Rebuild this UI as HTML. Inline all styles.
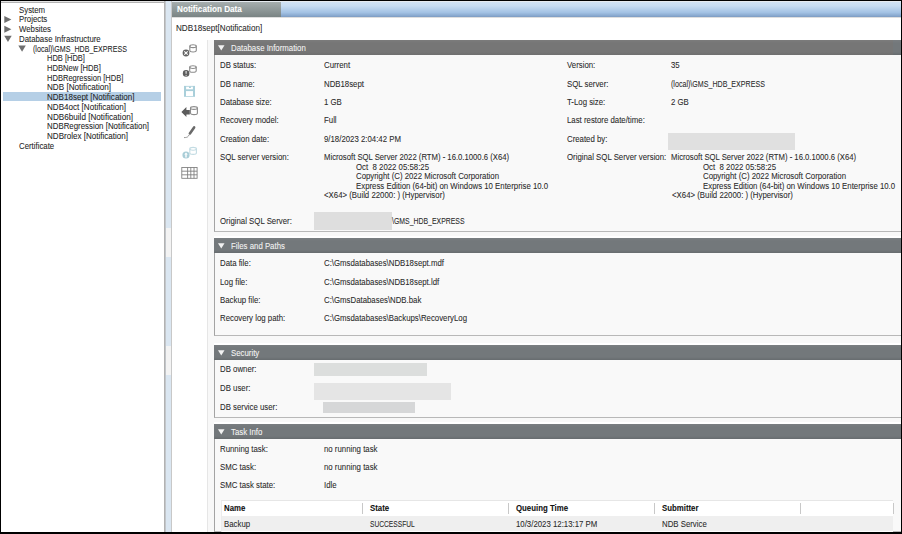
<!DOCTYPE html>
<html><head><meta charset="utf-8"><style>
html,body{margin:0;padding:0;width:902px;height:534px;overflow:hidden;background:#fff}
body{position:relative;font-family:"Liberation Sans",sans-serif}
.r{position:absolute}
.t,.tr,.th,.tb,.tb2{position:absolute;white-space:nowrap;font-size:8.6px;line-height:10px;color:#2a2a2a;transform:scaleX(0.91);transform-origin:0 0;-webkit-text-stroke:0.07px currentColor}
.tr{color:#262626}
.th{color:#f4f4f4}
.tb{font-weight:bold;color:#fff;transform:scaleX(0.95)!important}
.tb2{font-weight:bold;color:#111}
svg{position:absolute;left:0;top:0}
</style></head><body>
<div class="r" style="left:0px;top:0px;width:902px;height:534px;background:#fff"></div>
<div class="r" style="left:0px;top:0px;width:902px;height:1px;background:#000"></div>
<div class="r" style="left:0px;top:532px;width:902px;height:2px;background:#000"></div>
<div class="r" style="left:0px;top:0px;width:1px;height:534px;background:#000"></div>
<div class="r" style="left:901px;top:0px;width:1px;height:534px;background:#000"></div>
<div class="r" style="left:1px;top:1px;width:163px;height:1px;background:#e4e4e4"></div>
<div class="r" style="left:1px;top:2px;width:163px;height:1px;background:#b4b4b4"></div>
<div class="r" style="left:164px;top:1px;width:1px;height:531px;background:#b2b2b2"></div>
<div class="r" style="left:165px;top:1px;width:1px;height:531px;background:#c2c6ca"></div>
<div class="r" style="left:166px;top:1px;width:5px;height:531px;background:#dae6f1"></div>
<div class="r" style="left:166px;top:228px;width:5px;height:28.5px;background:#f3f3f3"></div>
<div class="r" style="left:166px;top:345.7px;width:5px;height:29.30000000000001px;background:#f3f3f3"></div>
<div class="r" style="left:171px;top:1px;width:1px;height:531px;background:#c8c8c8"></div>
<div class="r" style="left:3px;top:92.3px;width:158px;height:9.200000000000003px;background:#b5cfe6"></div>
<div class="tr" style="left:18.80px;top:4.62px;">System</div>
<div class="tr" style="left:18.80px;top:14.34px;">Projects</div>
<div class="tr" style="left:18.80px;top:24.06px;">Websites</div>
<div class="tr" style="left:18.80px;top:33.78px;">Database Infrastructure</div>
<div class="tr" style="left:32.90px;top:43.50px;transform:scaleX(0.826);">(local)\GMS_HDB_EXPRESS</div>
<div class="tr" style="left:46.80px;top:53.22px;transform:scaleX(0.873);">HDB [HDB]</div>
<div class="tr" style="left:46.80px;top:62.94px;transform:scaleX(0.887);">HDBNew [HDB]</div>
<div class="tr" style="left:46.80px;top:72.66px;transform:scaleX(0.878);">HDBRegression [HDB]</div>
<div class="tr" style="left:46.80px;top:82.38px;transform:scaleX(0.945);">NDB [Notification]</div>
<div class="tr" style="left:46.80px;top:92.10px;transform:scaleX(0.935);">NDB18sept [Notification]</div>
<div class="tr" style="left:46.80px;top:101.82px;transform:scaleX(0.941);">NDB4oct [Notification]</div>
<div class="tr" style="left:46.80px;top:111.54px;transform:scaleX(0.947);">NDB6build [Notification]</div>
<div class="tr" style="left:46.80px;top:121.26px;transform:scaleX(0.917);">NDBRegression [Notification]</div>
<div class="tr" style="left:46.80px;top:130.98px;transform:scaleX(0.937);">NDBrolex [Notification]</div>
<div class="tr" style="left:18.80px;top:140.70px;">Certificate</div>
<div class="r" style="left:172px;top:1px;width:729px;height:1px;background:#e6ebf0"></div>
<div class="r" style="left:172px;top:2px;width:109px;height:15px;background:linear-gradient(#a6aeae,#7a8484)"></div>
<div class="r" style="left:281px;top:2px;width:620px;height:15px;background:linear-gradient(#d0e2f4,#c8ddf2 25%,#a3c2e4 70%,#8aaad0 90%,#7d9bc1)"></div>
<div class="r" style="left:172px;top:17px;width:729px;height:1px;background:#dedede"></div>
<div class="tb" style="left:176.70px;top:3.72px;">Notification Data</div>
<div class="t" style="left:175.80px;top:23.42px;transform:scaleX(0.945);">NDB18sept[Notification]</div>
<div class="r" style="left:207px;top:40px;width:1px;height:492px;background:#e6e6e6"></div>
<div class="r" style="left:208px;top:40px;width:693px;height:492px;background:#f8f8f8"></div>
<div class="r" style="left:214px;top:40px;width:687px;height:192px;background:#f9f9f9;border-left:1px solid #a4a4a4;border-bottom:1px solid #b8b8b8;box-sizing:border-box"></div>
<div class="r" style="left:214px;top:40px;width:687px;height:14.5px;background:linear-gradient(#7c7c7c,#767676 20%,#767676 80%,#6f6f6f)"></div>
<div class="th" style="left:231.00px;top:43.02px;">Database Information</div>
<div class="r" style="left:892.5px;top:40px;width:8.5px;height:14.5px;background:linear-gradient(#7a7e81,#73787b 20%,#73787b 80%,#676c6f)"></div>
<div class="r" style="left:214px;top:238px;width:687px;height:98px;background:#f9f9f9;border-left:1px solid #a4a4a4;border-bottom:1px solid #b8b8b8;box-sizing:border-box"></div>
<div class="r" style="left:214px;top:235.5px;width:687px;height:2.5px;background:#fff"></div>
<div class="r" style="left:214px;top:238px;width:687px;height:14.5px;background:linear-gradient(#7a7e81,#73787b 20%,#73787b 80%,#676c6f)"></div>
<div class="th" style="left:231.00px;top:241.02px;">Files and Paths</div>
<div class="r" style="left:214px;top:345px;width:687px;height:73px;background:#f9f9f9;border-left:1px solid #a4a4a4;border-bottom:1px solid #b8b8b8;box-sizing:border-box"></div>
<div class="r" style="left:214px;top:342.5px;width:687px;height:2.5px;background:#fff"></div>
<div class="r" style="left:214px;top:345px;width:687px;height:14.5px;background:linear-gradient(#7a7e81,#73787b 20%,#73787b 80%,#676c6f)"></div>
<div class="th" style="left:231.00px;top:348.02px;">Security</div>
<div class="r" style="left:214px;top:424px;width:687px;height:108px;background:#f9f9f9;border-left:1px solid #a4a4a4;border-bottom:1px solid #b8b8b8;box-sizing:border-box"></div>
<div class="r" style="left:214px;top:421.5px;width:687px;height:2.5px;background:#fff"></div>
<div class="r" style="left:214px;top:424px;width:687px;height:14.5px;background:linear-gradient(#7a7e81,#73787b 20%,#73787b 80%,#676c6f)"></div>
<div class="th" style="left:231.00px;top:427.02px;">Task Info</div>
<div class="t" style="left:220.00px;top:60.12px;">DB status:</div>
<div class="t" style="left:323.80px;top:60.12px;">Current</div>
<div class="t" style="left:567.10px;top:60.12px;">Version:</div>
<div class="t" style="left:671.00px;top:60.12px;">35</div>
<div class="t" style="left:220.00px;top:78.62px;">DB name:</div>
<div class="t" style="left:323.80px;top:78.62px;">NDB18sept</div>
<div class="t" style="left:567.10px;top:78.62px;">SQL server:</div>
<div class="t" style="left:671.00px;top:78.62px;transform:scaleX(0.826);">(local)\GMS_HDB_EXPRESS</div>
<div class="t" style="left:220.00px;top:97.02px;">Database size:</div>
<div class="t" style="left:323.80px;top:97.02px;">1 GB</div>
<div class="t" style="left:567.10px;top:97.02px;">T-Log size:</div>
<div class="t" style="left:671.00px;top:97.02px;">2 GB</div>
<div class="t" style="left:220.00px;top:115.42px;">Recovery model:</div>
<div class="t" style="left:323.80px;top:115.42px;">Full</div>
<div class="t" style="left:567.10px;top:115.42px;">Last restore date/time:</div>
<div class="t" style="left:220.00px;top:133.82px;">Creation date:</div>
<div class="t" style="left:323.80px;top:133.82px;">9/18/2023 2:04:42 PM</div>
<div class="t" style="left:567.10px;top:133.82px;">Created by:</div>
<div class="t" style="left:220.00px;top:152.22px;">SQL server version:</div>
<div class="t" style="left:323.80px;top:152.22px;transform:scaleX(0.897);">Microsoft SQL Server 2022 (RTM) - 16.0.1000.6 (X64)</div>
<div class="t" style="left:567.10px;top:152.22px;">Original SQL Server version:</div>
<div class="t" style="left:671.00px;top:152.22px;transform:scaleX(0.897);">Microsoft SQL Server 2022 (RTM) - 16.0.1000.6 (X64)</div>
<div class="t" style="left:355.80px;top:161.77px;white-space:pre">Oct  8 2022 05:58:25</div>
<div class="t" style="left:703.00px;top:161.77px;white-space:pre">Oct  8 2022 05:58:25</div>
<div class="t" style="left:355.80px;top:171.32px;white-space:pre">Copyright (C) 2022 Microsoft Corporation</div>
<div class="t" style="left:703.00px;top:171.32px;white-space:pre">Copyright (C) 2022 Microsoft Corporation</div>
<div class="t" style="left:355.80px;top:180.87px;white-space:pre">Express Edition (64-bit) on Windows 10 Enterprise 10.0</div>
<div class="t" style="left:703.00px;top:180.87px;white-space:pre">Express Edition (64-bit) on Windows 10 Enterprise 10.0</div>
<div class="t" style="left:324.40px;top:190.42px;white-space:pre">&lt;X64&gt; (Build 22000: ) (Hypervisor)</div>
<div class="t" style="left:671.60px;top:190.42px;white-space:pre">&lt;X64&gt; (Build 22000: ) (Hypervisor)</div>
<div class="r" style="left:668px;top:132.7px;width:127px;height:17.100000000000023px;background:#e0e0e0"></div>
<div class="r" style="left:314px;top:212px;width:78px;height:17.599999999999994px;background:#dedede"></div>
<div class="t" style="left:220.00px;top:216.02px;">Original SQL Server:</div>
<div class="t" style="left:392.00px;top:216.02px;transform:scaleX(0.804);">\GMS_HDB_EXPRESS</div>
<div class="t" style="left:220.00px;top:258.22px;">Data file:</div>
<div class="t" style="left:323.80px;top:258.22px;">C:\Gmsdatabases\NDB18sept.mdf</div>
<div class="t" style="left:220.00px;top:276.62px;">Log file:</div>
<div class="t" style="left:323.80px;top:276.62px;">C:\Gmsdatabases\NDB18sept.ldf</div>
<div class="t" style="left:220.00px;top:294.82px;">Backup file:</div>
<div class="t" style="left:323.80px;top:294.82px;">C:\GmsDatabases\NDB.bak</div>
<div class="t" style="left:220.00px;top:312.92px;">Recovery log path:</div>
<div class="t" style="left:323.80px;top:312.92px;">C:\Gmsdatabases\Backups\RecoveryLog</div>
<div class="t" style="left:220.00px;top:364.32px;">DB owner:</div>
<div class="t" style="left:220.00px;top:383.02px;">DB user:</div>
<div class="t" style="left:220.00px;top:401.82px;">DB service user:</div>
<div class="r" style="left:314px;top:362.8px;width:113px;height:13.099999999999966px;background:#dcdedd"></div>
<div class="r" style="left:314px;top:382.9px;width:137px;height:16.900000000000034px;background:#e5e5e5"></div>
<div class="r" style="left:323px;top:401.8px;width:92px;height:11.199999999999989px;background:#d6d7d8"></div>
<div class="t" style="left:220.00px;top:443.82px;">Running task:</div>
<div class="t" style="left:323.80px;top:443.82px;">no running task</div>
<div class="t" style="left:220.00px;top:462.12px;">SMC task:</div>
<div class="t" style="left:323.80px;top:462.12px;">no running task</div>
<div class="t" style="left:220.00px;top:480.22px;">SMC task state:</div>
<div class="t" style="left:323.80px;top:480.22px;">Idle</div>
<div class="r" style="left:220.5px;top:500.2px;width:672.5px;height:31.80000000000001px;background:#fff;border-top:1px solid #e6e6e6;border-left:1px solid #ececec;box-sizing:border-box"></div>
<div class="r" style="left:221.5px;top:516px;width:671.5px;height:15px;background:#efefef"></div>
<div class="r" style="left:362px;top:503px;width:1px;height:11px;background:#c8c8c8"></div>
<div class="r" style="left:508.3px;top:503px;width:1.0px;height:11px;background:#c8c8c8"></div>
<div class="r" style="left:654px;top:503px;width:1px;height:11px;background:#c8c8c8"></div>
<div class="r" style="left:800px;top:503px;width:1px;height:11px;background:#c8c8c8"></div>
<div class="r" style="left:892.6px;top:503px;width:1.0px;height:11px;background:#c8c8c8"></div>
<div class="tb2" style="left:224.30px;top:502.82px;">Name</div>
<div class="tb2" style="left:369.70px;top:502.82px;">State</div>
<div class="tb2" style="left:515.60px;top:502.82px;">Queuing Time</div>
<div class="tb2" style="left:661.50px;top:502.82px;">Submitter</div>
<div class="t" style="left:224.30px;top:518.62px;">Backup</div>
<div class="t" style="left:369.70px;top:518.62px;transform:scaleX(0.775);">SUCCESSFUL</div>
<div class="t" style="left:515.60px;top:518.62px;">10/3/2023 12:13:17 PM</div>
<div class="t" style="left:661.50px;top:518.62px;">NDB Service</div>
<svg width="902" height="534" viewBox="0 0 902 534">
<polygon points="4.3,15.92 11.4,19.42 4.3,22.92" fill="#6f6f6f"/>
<polygon points="4.3,25.64 11.4,29.14 4.3,32.64" fill="#6f6f6f"/>
<polygon points="4.20,35.76 11.70,35.76 7.95,42.06" fill="#6f6f6f"/>
<polygon points="18.30,45.48 25.80,45.48 22.05,51.78" fill="#6f6f6f"/>
<polygon points="218,45.30 224.5,45.30 221.25,50.60" fill="#f2f2f2"/>
<polygon points="218,243.30 224.5,243.30 221.25,248.60" fill="#f2f2f2"/>
<polygon points="218,350.30 224.5,350.30 221.25,355.60" fill="#f2f2f2"/>
<polygon points="218,429.30 224.5,429.30 221.25,434.60" fill="#f2f2f2"/>
<g fill="none" stroke="#8c8c8c" stroke-width="1.1"><path d="M189.8,46.199999999999996 L189.8,50.6 A3.25,1.4 0 0 0 196.3,50.6 L196.3,46.199999999999996"/><ellipse cx="193.05" cy="46.199999999999996" rx="3.25" ry="1.4"/></g>
<circle cx="186" cy="53" r="3.4" fill="#636363"/>
<path d="M184.3,51.3 L187.7,54.7 M187.7,51.3 L184.3,54.7" stroke="#fff" stroke-width="1.1"/>
<g fill="none" stroke="#8c8c8c" stroke-width="1.1"><path d="M189.7,67.10000000000001 L189.7,70.89999999999999 A3.25,1.4 0 0 0 196.2,70.89999999999999 L196.2,67.10000000000001"/><ellipse cx="192.95" cy="67.10000000000001" rx="3.25" ry="1.4"/></g>
<circle cx="186.1" cy="73.4" r="3.3" fill="#5e5e5e"/>
<path d="M186.1,71.0 L186.1,73.8" stroke="#e8e8e8" stroke-width="1.1"/><circle cx="186.1" cy="75.3" r="0.6" fill="#e8e8e8"/>
<rect x="184" y="85.9" width="11" height="10.9" fill="#a9cfda"/>
<rect x="186.1" y="86.7" width="6.8" height="2.6" fill="#fff"/>
<rect x="189.1" y="86.7" width="1.7" height="1.2" fill="#94c2cf"/>
<rect x="186.0" y="91.1" width="7.0" height="5.0" fill="#fff"/>
<g fill="none" stroke="#8c8c8c" stroke-width="1.1"><path d="M190.5,108.0 L190.5,113.19999999999999 A3.450000000000003,1.4 0 0 0 197.4,113.19999999999999 L197.4,108.0"/><ellipse cx="193.95" cy="108.0" rx="3.450000000000003" ry="1.4"/></g>
<path d="M181.4,112.1 L186.4,107 L186.4,109.9 L189.8,109.9 L189.8,114.4 L186.4,114.4 L186.4,116.9 Z" fill="#5c5c5c"/>
<path d="M189.9,133.4 L194.1,127.4" stroke="#6a6a6a" stroke-width="2.6" stroke-linecap="round"/>
<path d="M189.3,134.6 L188.3,136.2 C187.5,137.3 186,137.6 184,137.6" stroke="#8a8a8a" stroke-width="0.9" fill="none"/>
<g fill="none" stroke="#c3dce3" stroke-width="1.1"><path d="M189.8,148.8 L189.8,153.0 A3.299999999999997,1.4 0 0 0 196.4,153.0 L196.4,148.8"/><ellipse cx="193.10000000000002" cy="148.8" rx="3.299999999999997" ry="1.4"/></g>
<circle cx="186" cy="155" r="3.6" fill="#a9cdd7"/>
<path d="M186,152.4 L184.2,154.5 L185.3,154.5 L185.3,157.6 L186.7,157.6 L186.7,154.5 L187.8,154.5 Z" fill="#fff"/>
<g stroke="#7c7c7c" stroke-width="0.85" fill="none"><rect x="181.8" y="167.5" width="15.3" height="10.8"/><path d="M181.8,171.2 H197.1 M181.8,174.8 H197.1 M187.6,167.5 V178.3 M190.8,167.5 V178.3 M194.0,167.5 V178.3"/></g>
</svg>
</body></html>
